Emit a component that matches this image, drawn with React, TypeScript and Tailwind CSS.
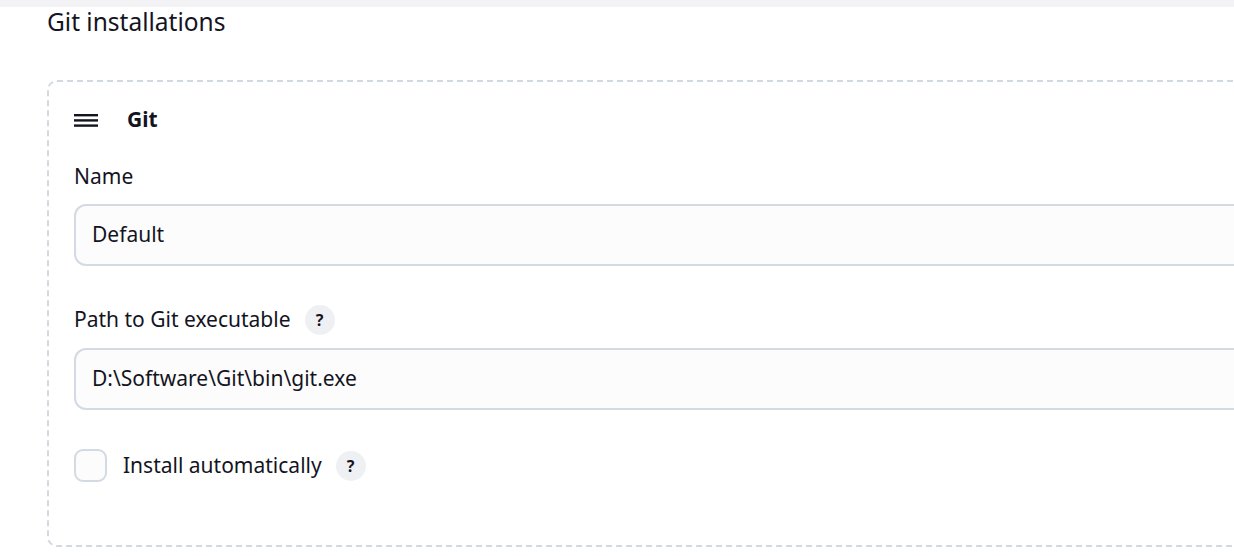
import React from 'react';

const font = { fontFamily: '"Noto Sans", "Open Sans", sans-serif' };

function HelpIcon() {
  return (
    <span className="inline-flex items-center justify-center w-[30px] h-[30px] rounded-full bg-[#eef0f3] text-[16px] font-bold text-[#14141f] leading-none">
      ?
    </span>
  );
}

function Hamburger() {
  return (
    <svg width="24" height="13" viewBox="0 0 24 13" className="shrink-0">
      <rect x="0" y="0" width="24" height="2.4" fill="#14141f" />
      <rect x="0" y="5.2" width="24" height="2.4" fill="#14141f" />
      <rect x="0" y="10.4" width="24" height="2.4" fill="#14141f" />
    </svg>
  );
}

function TextField({ value }: { value: string }) {
  return (
    <div className="h-[62px] w-full rounded-[12px] border-2 border-[#d3dae3] bg-[#fcfcfc] flex items-center pl-[16px] text-[21px] text-[#14141f]">
      {value}
    </div>
  );
}

export default function App() {
  return (
    <div className="w-[1234px] h-[556px] overflow-hidden bg-white" style={font}>
      <div className="h-[7px] bg-[#f3f3f5]" />
      <h2 className="pl-[47px] pt-[1px] text-[24.5px] leading-[28px] text-[#14141f] font-normal">Git installations</h2>

      <div className="ml-[47px] mt-[44px] w-[1260px] h-[467px] rounded-[10px] border-2 border-dashed border-[#d3d9e1] pl-[25px] pr-[30px]">
        <div className="flex items-center gap-[29px] h-[24px] mt-[26px]">
          <Hamburger />
          <span className="text-[21px] font-bold text-[#14141f]">Git</span>
        </div>

        <div className="mt-[30px] text-[21px] leading-[28px] text-[#14141f]">Name</div>
        <div className="mt-[14px]">
          <TextField value="Default" />
        </div>

        <div className="mt-[39px] flex items-center gap-[14px] h-[30px]">
          <span className="text-[21px] text-[#14141f]">Path to Git executable</span>
          <HelpIcon />
        </div>
        <div className="mt-[13px]">
          <TextField value="D:\Software\Git\bin\git.exe" />
        </div>

        <div className="mt-[39px] flex items-center h-[33px]">
          <span className="w-[33px] h-[33px] rounded-[9px] border-2 border-[#d3dae3] bg-[#fcfcfc] shrink-0" />
          <span className="ml-[16px] text-[21px] text-[#14141f]">Install automatically</span>
          <span className="ml-[14px]"><HelpIcon /></span>
        </div>
      </div>
    </div>
  );
}
